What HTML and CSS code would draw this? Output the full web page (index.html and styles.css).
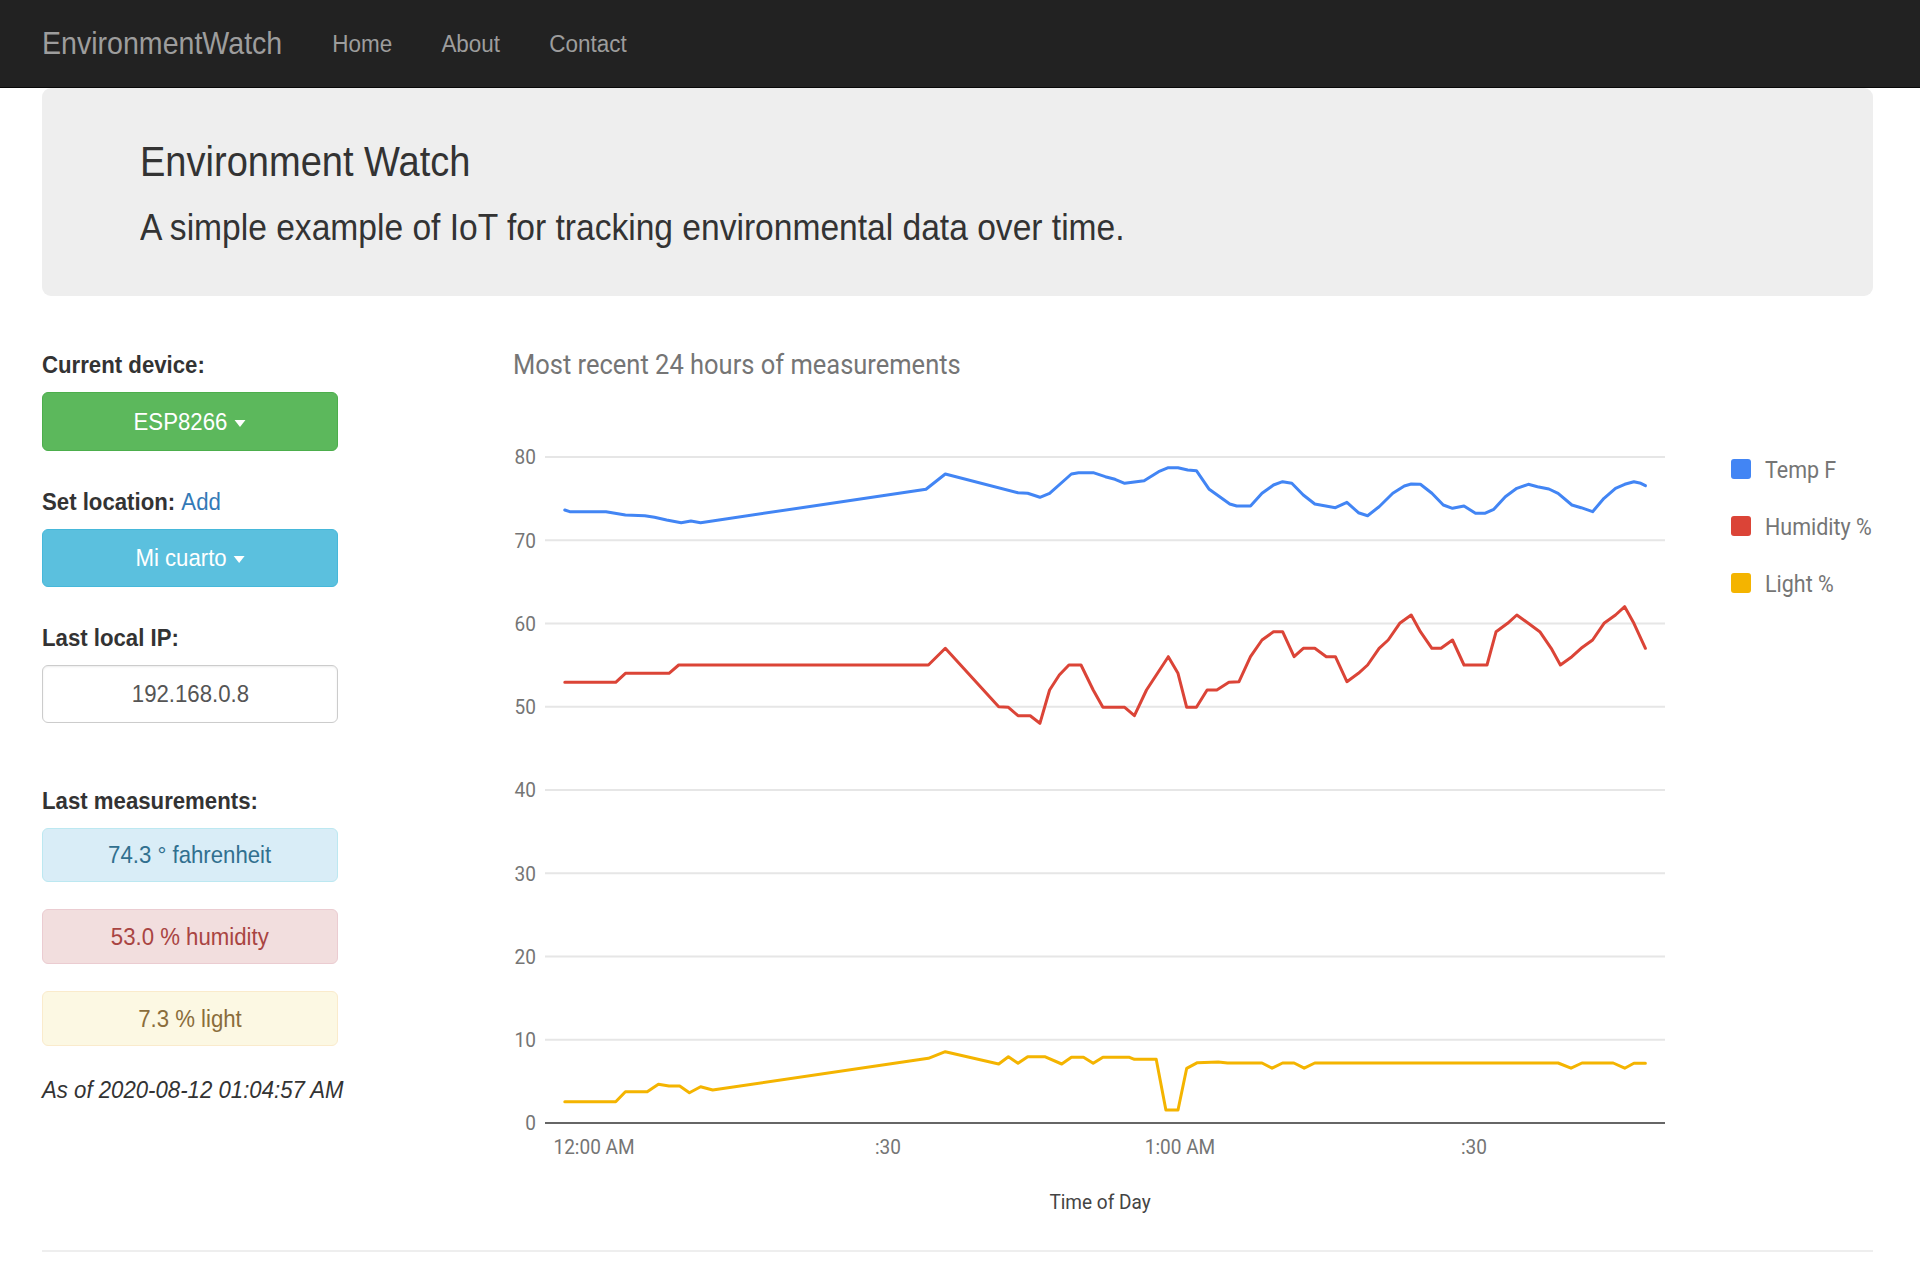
FILE: index.html
```html
<!DOCTYPE html>
<html lang="en">
<head>
<meta charset="utf-8">
<title>EnvironmentWatch</title>
<link rel="stylesheet" href="styles.css">
</head>
<body>
<nav class="navbar">
  <div class="nav-group">
    <a class="brand" href="#">EnvironmentWatch</a>
    <a class="nav-link" href="#">Home</a>
    <a class="nav-link" href="#">About</a>
    <a class="nav-link" href="#">Contact</a>
  </div>
</nav>
<div class="container">
  <div class="jumbotron">
    <h1><span class="sq">Environment Watch</span></h1>
    <p><span class="sq">A simple example of IoT for tracking environmental data over time.</span></p>
  </div>
  <div class="main">
    <div class="sidebar">
      <div class="field-label first"><span class="sq">Current device:</span></div>
      <div class="btn btn-success control"><span class="sq mid">ESP8266<span class="caret"></span></span></div>
      <div class="field-label"><span class="sq">Set location: <a class="add-link" href="#">Add</a></span></div>
      <div class="btn btn-info control"><span class="sq mid">Mi cuarto<span class="caret"></span></span></div>
      <div class="field-label"><span class="sq">Last local IP:</span></div>
      <div class="ip-box control"><span class="sq mid">192.168.0.8</span></div>
      <div class="field-label wide-gap"><span class="sq">Last measurements:</span></div>
      <div class="alert alert-info control"><span class="sq mid">74.3 ° fahrenheit</span></div>
      <div class="alert alert-danger"><span class="sq mid">53.0 % humidity</span></div>
      <div class="alert alert-warning"><span class="sq mid">7.3 % light</span></div>
      <div class="as-of"><span class="sq">As of 2020-08-12 01:04:57 AM</span></div>
    </div>
    <div class="chart-col">
      <div class="chart-title"><span class="sq">Most recent 24 hours of measurements</span></div>
      <svg class="chart" width="1373" height="849" viewBox="500 381 1373 849" xmlns="http://www.w3.org/2000/svg">
        <g class="grid">
          <line x1="545" y1="457" x2="1665" y2="457"/>
          <line x1="545" y1="540.25" x2="1665" y2="540.25"/>
          <line x1="545" y1="623.5" x2="1665" y2="623.5"/>
          <line x1="545" y1="706.75" x2="1665" y2="706.75"/>
          <line x1="545" y1="790" x2="1665" y2="790"/>
          <line x1="545" y1="873.25" x2="1665" y2="873.25"/>
          <line x1="545" y1="956.5" x2="1665" y2="956.5"/>
          <line x1="545" y1="1039.75" x2="1665" y2="1039.75"/>
        </g>
        <line class="baseline" x1="545" y1="1123" x2="1665" y2="1123"/>
        <g class="ylabels">
          <text x="536" y="457">80</text>
          <text x="536" y="540.25">70</text>
          <text x="536" y="623.5">60</text>
          <text x="536" y="706.75">50</text>
          <text x="536" y="790">40</text>
          <text x="536" y="873.25">30</text>
          <text x="536" y="956.5">20</text>
          <text x="536" y="1039.75">10</text>
          <text x="536" y="1123">0</text>
        </g>
        <g class="xlabels">
          <text x="594" y="1147">12:00 AM</text>
          <text x="888" y="1147">:30</text>
          <text x="1180" y="1147">1:00 AM</text>
          <text x="1474" y="1147">:30</text>
        </g>
        <text class="axis-title" x="1100" y="1202">Time of Day</text>
        <polyline class="series temp" points="564.8,510 569.7,511.7 606,511.7 625.4,515 644.8,515.7 654.5,517.3 666.6,520 681.2,522.7 690.9,521 700.6,522.7 926,489.3 945.3,474 1018,492.7 1027.7,493.3 1039.9,497.3 1049.6,493.3 1071.4,474 1078.6,472.7 1093.2,472.7 1105.3,476.7 1115,479.3 1124.7,483.3 1144.1,480.7 1158.6,471.7 1168.3,467.7 1178,467.7 1187.7,470 1196.4,470.7 1209.2,489.3 1229.8,504 1236.7,506 1250.5,506 1262,493.3 1273.5,485 1282.6,481.7 1291.8,483.3 1303.3,495 1314.8,504 1335.4,507.7 1346.9,502.3 1358.4,512.7 1367.6,515.7 1379.1,506.7 1392.8,493.3 1404.3,486 1411.2,484 1420.4,484.3 1431.9,493.3 1443.3,505 1452.5,508.3 1464,506 1475.5,513.3 1484.7,513.3 1493.8,509.3 1505.3,496.7 1516.8,488.3 1528.3,484.3 1537.5,486.7 1548.9,489 1558.1,493.3 1571.9,505 1581.1,507.7 1592.6,511.7 1604,498.3 1615.5,488.3 1624.7,484.3 1633.9,481.7 1640.8,483.3 1645.4,485.7"/>
        <polyline class="series hum" points="564.8,682.3 615.7,682.3 625.4,673.3 669,673.3 678.7,665 928.4,665 945.3,648.3 998.7,706.7 1008.4,707.3 1018,715.7 1030.2,715.7 1039.9,723.3 1049.6,690 1059.3,675 1068.9,665 1081,665 1093.2,690 1102.9,707.3 1124.7,707.3 1134.4,715.7 1146.5,690 1168.3,656.7 1178,673.3 1186.7,707.3 1196.4,707.3 1207.1,690 1216.8,690 1228.9,682.3 1239,681.7 1250.5,656.7 1262,640 1273.5,631.7 1282.6,631.7 1294.1,656.7 1303.3,648.3 1314.8,648.3 1326.3,656.7 1335.4,656.7 1346.9,681.7 1358.4,673.3 1367.6,665 1379.1,648.3 1388.2,640 1399.7,623.3 1411.2,615 1420.4,631.7 1431.9,648.3 1441,648.3 1452.5,640 1464,665 1475.5,665 1487,665 1496.1,631.7 1507.6,623.3 1516.8,615 1528.3,623.3 1539.8,631.7 1551.2,648.3 1560.4,665 1571.9,656.7 1581.1,648.3 1592.6,640 1604,623.3 1615.5,615 1624.7,606.7 1633.9,623.3 1645.4,648.3"/>
        <polyline class="series light" points="564.8,1101.7 615.7,1101.7 625.4,1091.7 647.2,1091.7 658.4,1084.3 669,1086 679.7,1086 689.4,1092.7 700.6,1086.7 712.7,1090 928.4,1058.3 945.3,1051.7 998.7,1064 1008.4,1056.7 1018,1063.3 1027.7,1056.7 1044.7,1056.7 1061.7,1064 1071.4,1057.3 1083.5,1057.3 1093.2,1063.3 1102.9,1057.3 1129.5,1057.3 1134.4,1059.3 1156.2,1059.3 1165.9,1110 1178,1110 1186.7,1068.3 1197.4,1062.7 1218.4,1062 1227.5,1063 1262,1063 1272.1,1068.2 1282.6,1063 1294.1,1063 1304.2,1068.2 1314.8,1063 1558.1,1063 1571,1068.2 1582,1063 1613.2,1063 1624.7,1068.2 1633.9,1063.3 1645.4,1063.3"/>
        <g class="legend">
          <rect x="1731" y="459" width="20" height="20" rx="3" fill="#4285f4"/>
          <text x="1765" y="470">Temp F</text>
          <rect x="1731" y="516" width="20" height="20" rx="3" fill="#db4437"/>
          <text x="1765" y="527">Humidity %</text>
          <rect x="1731" y="573" width="20" height="20" rx="3" fill="#f4b400"/>
          <text x="1765" y="584">Light %</text>
        </g>
      </svg>
    </div>
  </div>
  <hr class="footer-rule">
</div>
</body>
</html>
```
FILE: styles.css
```css
html, body {
  margin: 0;
  padding: 0;
}
body {
  font-family: "Liberation Sans", Arial, sans-serif;
  font-size: 24.4px;
  color: #333;
  background: #fff;
}
a {
  text-decoration: none;
}

/* The reference is rendered slightly condensed: text glyphs are squeezed horizontally */
.sq {
  display: inline-block;
  white-space: nowrap;
  transform: scaleX(0.91);
  transform-origin: left center;
}
.sq.mid {
  transform-origin: center center;
}

.navbar {
  height: 88px;
  box-sizing: border-box;
  background: #222;
  border-bottom: 1px solid #080808;
  display: flex;
  align-items: center;
  padding-left: 42px;
}
.nav-group {
  display: flex;
  align-items: center;
  white-space: nowrap;
  transform: scaleX(0.91);
  transform-origin: left center;
}
.brand {
  font-size: 31.4px;
  color: #9d9d9d;
  margin-right: 55px;
}
.nav-link {
  font-size: 24.7px;
  color: #9d9d9d;
  margin-right: 54px;
}
.container {
  padding: 0 47px 0 42px;
}
.jumbotron {
  background: #eee;
  border-radius: 9px;
  padding: 53px 98px 45px;
}
.jumbotron h1 {
  margin: 0;
  font-size: 41.8px;
  font-weight: normal;
  line-height: 42px;
}
.jumbotron p {
  margin: 21px 0 0;
  font-size: 36.9px;
  line-height: 47px;
}
.main {
  display: flex;
  align-items: flex-start;
}
.sidebar {
  width: 296px;
  flex: none;
  display: flex;
  flex-direction: column;
}
.field-label {
  font-weight: bold;
  line-height: 32px;
  margin-top: 35px;
  white-space: nowrap;
}
.field-label.first {
  margin-top: 53px;
}
.field-label.wide-gap {
  margin-top: 62px;
}
.add-link {
  font-weight: normal;
  color: #337ab7;
}
.control {
  margin-top: 11px;
}
.btn {
  height: 59px;
  box-sizing: border-box;
  border-radius: 6px;
  border: 1px solid transparent;
  color: #fff;
  display: flex;
  align-items: center;
  justify-content: center;
}
.btn-success {
  background: #5cb85c;
  border-color: #4cae4c;
}
.btn-info {
  background: #5bc0de;
  border-color: #46b8da;
  height: 58px;
}
.caret {
  display: inline-block;
  vertical-align: middle;
  width: 0;
  height: 0;
  margin-left: 8px;
  border-top: 7px solid #fff;
  border-left: 6px solid transparent;
  border-right: 6px solid transparent;
}
.ip-box {
  height: 58px;
  box-sizing: border-box;
  border: 1px solid #ccc;
  border-radius: 6px;
  box-shadow: inset 0 1px 2px rgba(0, 0, 0, 0.075);
  color: #555;
  display: flex;
  align-items: center;
  justify-content: center;
}
.alert {
  height: 55px;
  box-sizing: border-box;
  border: 1px solid transparent;
  border-radius: 6px;
  display: flex;
  align-items: center;
  justify-content: center;
  margin-top: 27px;
}
.alert.control {
  margin-top: 11px;
  height: 54px;
}
.alert-info {
  background: #d9edf7;
  border-color: #bce8f1;
  color: #31708f;
}
.alert-danger {
  background: #f2dede;
  border-color: #ebccd1;
  color: #a94442;
}
.alert-warning {
  background: #fcf8e3;
  border-color: #faebcc;
  color: #8a6d3b;
}
.as-of {
  font-style: italic;
  line-height: 32px;
  margin-top: 28px;
  white-space: nowrap;
}
.chart-col {
  margin-left: 162px;
  flex: 1;
  padding-top: 53px;
}
.chart-title {
  font-family: Roboto, "Liberation Sans", sans-serif;
  font-size: 28px;
  line-height: 32px;
  color: #757575;
  padding-left: 13px;
}
.chart {
  display: block;
  overflow: visible;
  font-family: Roboto, "Liberation Sans", sans-serif;
}
.chart text {
  transform-box: fill-box;
  transform: scaleX(0.91);
}
.grid line {
  stroke: #e6e6e6;
  stroke-width: 2;
}
.baseline {
  stroke: #666;
  stroke-width: 2;
}
.ylabels text {
  font-size: 20.9px;
  fill: #757575;
  text-anchor: end;
  dominant-baseline: central;
  transform-origin: right center;
}
.xlabels text {
  font-size: 20.9px;
  fill: #757575;
  text-anchor: middle;
  dominant-baseline: central;
  transform-origin: center center;
}
.axis-title {
  font-size: 20.9px;
  fill: #444;
  text-anchor: middle;
  dominant-baseline: central;
  transform-origin: center center;
}
.series {
  fill: none;
  stroke-width: 3;
  stroke-linejoin: round;
  stroke-linecap: round;
}
.temp {
  stroke: #4285f4;
}
.hum {
  stroke: #db4437;
}
.light {
  stroke: #f4b400;
}
.legend text {
  font-size: 23.6px;
  fill: #757575;
  dominant-baseline: central;
  transform-origin: left center;
}
.footer-rule {
  margin: 20px 0 0;
  border: 0;
  border-top: 2px solid #eee;
}
```
